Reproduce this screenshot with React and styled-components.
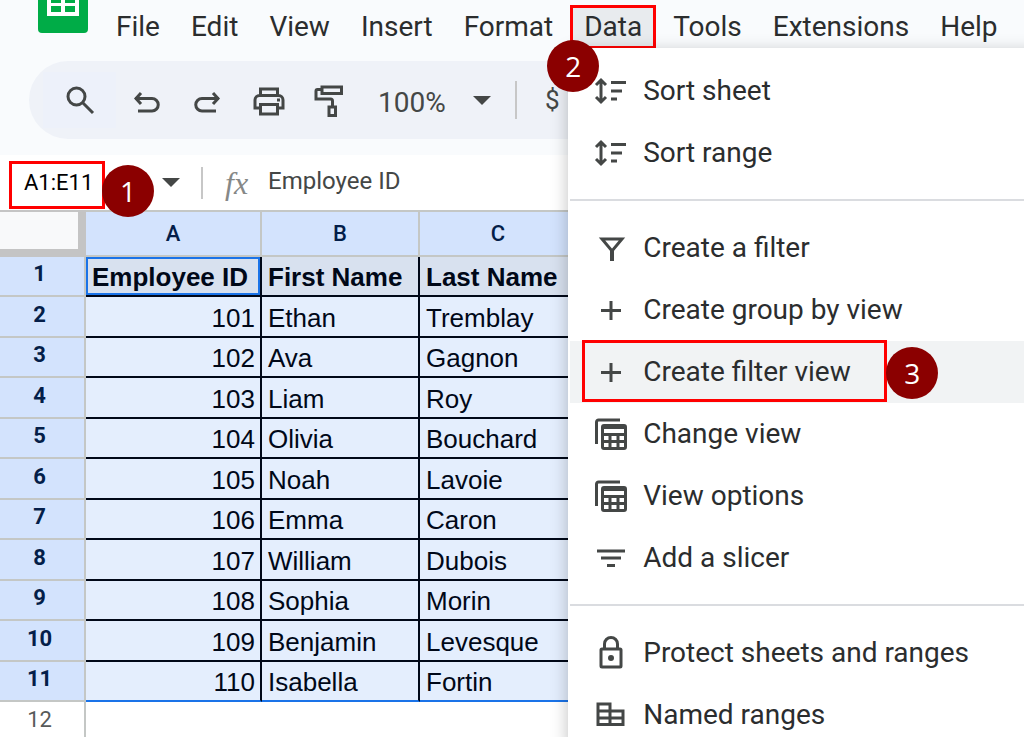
import styled, { createGlobalStyle } from 'styled-components'
import { useState } from 'react'

const employees = [
  { id: 101, firstName: 'Ethan', lastName: 'Tremblay' },
  { id: 102, firstName: 'Ava', lastName: 'Gagnon' },
  { id: 103, firstName: 'Liam', lastName: 'Roy' },
  { id: 104, firstName: 'Olivia', lastName: 'Bouchard' },
  { id: 105, firstName: 'Noah', lastName: 'Lavoie' },
  { id: 106, firstName: 'Emma', lastName: 'Caron' },
  { id: 107, firstName: 'William', lastName: 'Dubois' },
  { id: 108, firstName: 'Sophia', lastName: 'Morin' },
  { id: 109, firstName: 'Benjamin', lastName: 'Levesque' },
  { id: 110, firstName: 'Isabella', lastName: 'Fortin' },
]

const menus = ['File', 'Edit', 'View', 'Insert', 'Format', 'Data', 'Tools', 'Extensions', 'Help']

const SheetsLogo = () => (
  <Logo width="50" height="34" viewBox="0 0 50 34" aria-hidden="true">
    <path d="M0 0h50v29a4 4 0 0 1-4 4H4a4 4 0 0 1-4-4z" fill="#00ac47" />
    <path d="M9 0h32v16H9z" fill="#fff" />
    <path d="M13 0h10v3H13zM27 0h10v3H27zM13 6h10v6H13zM27 6h10v6H27z" fill="#00ac47" />
  </Logo>
)

const SearchIcon = () => (
  <Icon width="34" height="34" viewBox="0 0 34 34">
    <circle cx="13.500" cy="13.500" r="8.500" />
    <path d="M19.500 19.500 30 30" />
  </Icon>
)

const UndoIcon = () => (
  <Icon width="34" height="34" viewBox="0 0 34 34">
    <path d="m11 10-5 5.500 5 5.500M5 15.500h17a5.500 5.500 0 0 1 0 12.500H8" />
  </Icon>
)

const RedoIcon = () => (
  <Icon width="34" height="34" viewBox="0 0 34 34">
    <path d="m22 10 5 5.500-5 5.500M28 15.500H11A5.500 5.500 0 0 0 11 28h14" />
  </Icon>
)

const PrintIcon = () => (
  <Icon width="34" height="34" viewBox="0 0 34 34">
    <path d="M8.500 12V6h17v6M8.500 25H3v-8a4.500 4.500 0 0 1 4.500-4.500h19A4.500 4.500 0 0 1 31 17v8h-5.500" />
    <path d="M8.500 21.500h17V31h-17z" />
    <path d="M25 17h3" />
  </Icon>
)

const PaintIcon = () => (
  <Icon width="34" height="34" viewBox="0 0 34 34">
    <path d="M9 4h19.500v6.500H9zM9 6.500H4.500A1.500 1.500 0 0 0 3 8v8h14.500a2 2 0 0 1 2 2v5" />
    <path d="M16 24h6.500v8.500H16z" />
  </Icon>
)

const Caret = () => (
  <svg width="18" height="9" viewBox="0 0 18 9" aria-hidden="true">
    <path d="M0 0h18L9 9z" fill="#444746" />
  </svg>
)

const SortIcon = () => (
  <Icon width="34" height="34" viewBox="0 0 34 34">
    <path d="M7 6v22M2 11l5-5 5 5M2 23l5 5 5-5M17 8.500h15M17 17h11M17 25h6" />
  </Icon>
)

const FunnelIcon = () => (
  <Icon width="34" height="34" viewBox="0 0 34 34">
    <path d="M8 8h20L18 20z" />
    <path d="M18 18v12" strokeWidth="4" />
  </Icon>
)

const PlusIcon = () => (
  <Icon width="34" height="34" viewBox="0 0 34 34">
    <path d="M17 8v19M7 17.500h20" />
  </Icon>
)

const ViewsIcon = () => (
  <Icon width="34" height="34" viewBox="0 0 34 34">
    <path d="M2.500 27V5a2 2 0 0 1 2-2H26" />
    <rect x="8.500" y="8.500" width="23" height="23" rx="1.500" />
    <path d="M8.500 17.500h23M8.500 24.500h23M16 17.500v14M24 17.500v14" />
    <path d="M8.500 10h23" strokeWidth="4" />
  </Icon>
)

const SlicerIcon = () => (
  <Icon width="34" height="34" viewBox="0 0 34 34">
    <path d="M3 10h28M7 17h20M13 24.500h8" />
  </Icon>
)

const LockIcon = () => (
  <Icon width="34" height="34" viewBox="0 0 34 34">
    <rect x="7" y="13" width="20" height="18" rx="1" />
    <path d="M10.500 13V8a6.500 6.500 0 0 1 13 0v5" />
    <circle cx="17" cy="22" r="1.500" />
  </Icon>
)

const NamedRangesIcon = () => (
  <Icon width="34" height="34" viewBox="0 0 34 34">
    <path d="M4 6h12v20.500H4zM16 13h13v13.500H16zM4 13h12M4 20h25" />
  </Icon>
)

const menuGroups = [
  [
    { label: 'Sort sheet', icon: SortIcon },
    { label: 'Sort range', icon: SortIcon },
  ],
  [
    { label: 'Create a filter', icon: FunnelIcon },
    { label: 'Create group by view', icon: PlusIcon },
    { label: 'Create filter view', icon: PlusIcon, step: 3 },
    { label: 'Change view', icon: ViewsIcon },
    { label: 'View options', icon: ViewsIcon },
    { label: 'Add a slicer', icon: SlicerIcon },
  ],
  [
    { label: 'Protect sheets and ranges', icon: LockIcon },
    { label: 'Named ranges', icon: NamedRangesIcon },
  ],
]

function App() {
  const [range, setRange] = useState('A1:E11')
  const [formula, setFormula] = useState('Employee ID')

  return (
    <>
      <GlobalStyle />
      <Page>
        <Header>
          <MenuBar>
            <SheetsLogo />
            {menus.map((name) => (
              <MenuSlot key={name}>
                <MenuButton $open={name === 'Data'}>{name}</MenuButton>
                {name === 'Data' && (
                  <>
                    <DataMenu>
                      {menuGroups.map((group, i) => (
                        <MenuGroup key={i}>
                          {group.map(({ label, icon: ItemIcon, step }) => (
                            <MenuItem key={label} $hover={!!step}>
                              <ItemIcon />
                              {label}
                              {step && <ItemFrame><Badge $x="301px" $y="4px">{step}</Badge></ItemFrame>}
                            </MenuItem>
                          ))}
                        </MenuGroup>
                      ))}
                    </DataMenu>
                    <Badge $x="-23px" $y="40px">2</Badge>
                  </>
                )}
              </MenuSlot>
            ))}
          </MenuBar>
          <Toolbar>
            <SearchButton aria-label="Search the menus"><SearchIcon /></SearchButton>
            <ToolButton aria-label="Undo"><UndoIcon /></ToolButton>
            <ToolButton aria-label="Redo"><RedoIcon /></ToolButton>
            <ToolButton aria-label="Print"><PrintIcon /></ToolButton>
            <ToolButton aria-label="Paint format"><PaintIcon /></ToolButton>
            <Zoom>
              <select aria-label="Zoom" defaultValue="100%">
                <option>100%</option>
              </select>
              <Caret />
            </Zoom>
            <Separator $height="38px" />
            <CurrencyButton aria-label="Format as currency">$</CurrencyButton>
          </Toolbar>
        </Header>
        <FormulaBar>
          <NameBox>
            <NameInput aria-label="Name box" value={range} onChange={(e) => setRange(e.target.value)} />
            <Badge $x="90px" $y="1px">1</Badge>
          </NameBox>
          <CaretButton aria-label="Named ranges list"><Caret /></CaretButton>
          <Separator $height="32px" />
          <Fx>fx</Fx>
          <FormulaInput aria-label="Formula" value={formula} onChange={(e) => setFormula(e.target.value)} />
        </FormulaBar>
        <Sheet>
          <colgroup>
            <col width="86" />
            <col width="176" />
            <col width="158" />
            <col width="158" />
            <col />
          </colgroup>
          <thead>
            <tr>
              <Corner />
              <ColumnHead>A</ColumnHead>
              <ColumnHead>B</ColumnHead>
              <ColumnHead>C</ColumnHead>
              <ColumnHead />
            </tr>
          </thead>
          <tbody>
            <Row>
              <RowHead>1</RowHead>
              <TitleCell $active>Employee ID</TitleCell>
              <TitleCell>First Name</TitleCell>
              <TitleCell>Last Name</TitleCell>
              <TitleCell />
            </Row>
            {employees.map((employee, i) => (
              <Row key={employee.id} $last={i === employees.length - 1}>
                <RowHead>{i + 2}</RowHead>
                <Cell $number>{employee.id}</Cell>
                <Cell>{employee.firstName}</Cell>
                <Cell>{employee.lastName}</Cell>
                <Cell />
              </Row>
            ))}
            <Row>
              <RowHead $plain>12</RowHead>
              <EmptyCell colSpan="4" />
            </Row>
          </tbody>
        </Sheet>
      </Page>
    </>
  )
}

export default App

const GlobalStyle = createGlobalStyle`
  * {
    box-sizing: border-box;
  }
  body {
    margin: 0;
    overflow: hidden;
    background: #fff;
    font-family: Roboto, "Liberation Sans", sans-serif;
    color: #2b2d2e;
  }
  button, input, select {
    font: inherit;
    color: inherit;
    border: none;
    background: none;
    padding: 0;
    margin: 0;
    outline: none;
  }
`
const Page = styled.div`
  height: 100vh;
  overflow: hidden;
`
const Header = styled.header`
  background: #f9fbfd;
  padding-bottom: 16px;
`
const MenuBar = styled.nav`
  display: flex;
  height: 61px;
  padding-left: 38px;
`
const Logo = styled.svg`
  flex: none;
  margin-right: 14px;
`
const Icon = styled.svg`
  flex: none;
  fill: none;
  stroke: #444746;
  stroke-width: 3;
`
const MenuSlot = styled.div`
  position: relative;
  padding-top: 5px;
`
const MenuButton = styled.button`
  height: 44px;
  padding: 0 11px;
  margin-right: 3px;
  border: 3px solid ${(props) => (props.$open ? '#ff0000' : 'transparent')};
  background: ${(props) => (props.$open ? '#e8ebee' : 'transparent')};
  font-size: 28px;
  line-height: 32px;
`
const Badge = styled.span`
  position: absolute;
  z-index: 3;
  left: ${(props) => props.$x};
  top: ${(props) => props.$y};
  display: flex;
  align-items: center;
  justify-content: center;
  width: 52px;
  height: 52px;
  border-radius: 50%;
  background: #8b0000;
  color: #fff;
  font-family: "Open Sans", "Noto Sans", sans-serif;
  font-size: 28px;
  line-height: 32px;
`
const DataMenu = styled.div`
  position: absolute;
  z-index: 2;
  top: 48px;
  left: -2px;
  width: 560px;
  padding-top: 12px;
  border-left: 2px solid #fff;
  background: #fff;
  box-shadow: 0 4px 16px rgba(0, 0, 0, 0.25);
`
const MenuGroup = styled.div`
  & + & {
    margin-top: 15px;
    padding-top: 16px;
    border-top: 2px solid #dadce0;
  }
`
const MenuItem = styled.button`
  position: relative;
  display: flex;
  align-items: center;
  gap: 15px;
  width: 100%;
  height: 62px;
  padding-left: 24px;
  background: ${(props) => (props.$hover ? '#f1f3f4' : 'transparent')};
  font-size: 28px;
  line-height: 32px;
  text-align: left;
`
const ItemFrame = styled.span`
  position: absolute;
  left: 12px;
  top: -1px;
  width: 305px;
  height: 62px;
  border: 3px solid #ff0000;
`
const Toolbar = styled.div`
  display: flex;
  align-items: center;
  height: 78px;
  margin-left: 29px;
  padding-left: 14px;
  border-radius: 39px 0 0 39px;
  background: #eff2f8;
  color: #444746;
`
const ToolButton = styled.button`
  display: flex;
  justify-content: center;
  width: 61px;
`
const SearchButton = styled(ToolButton)`
  align-items: center;
  width: 73px;
  height: 56px;
  background: #edf1fa;
`
const Zoom = styled.label`
  display: flex;
  align-items: center;
  gap: 27px;
  margin: 0 24px 0 18px;
  select {
    appearance: none;
    padding-top: 6px;
    font-size: 28px;
    line-height: 32px;
  }
`
const Separator = styled.span`
  width: 2px;
  height: ${(props) => props.$height};
  background: #c7c7c7;
`
const CurrencyButton = styled.button`
  margin-left: 28px;
  font-size: 26px;
  line-height: 32px;
`
const FormulaBar = styled.div`
  display: flex;
  align-items: center;
  height: 55px;
  padding-left: 9px;
`
const NameBox = styled.div`
  position: relative;
  width: 96px;
  height: 48px;
  margin-top: 4px;
  border: 3px solid #ff0000;
`
const NameInput = styled.input`
  width: 100%;
  height: 100%;
  padding-left: 12px;
  padding-bottom: 4px;
  font-size: 22px;
  color: #000;
`
const CaretButton = styled.button`
  display: flex;
  margin: 0 21px 0 57px;
`
const Fx = styled.span`
  margin: 0 20px 0 22px;
  font-family: "Liberation Serif", serif;
  font-size: 32px;
  font-style: italic;
  line-height: 32px;
  color: #868887;
`
const FormulaInput = styled.input`
  flex: 1;
  padding-bottom: 4px;
  font-size: 24px;
  color: #444746;
`
const Sheet = styled.table`
  width: 100%;
  table-layout: fixed;
  border-collapse: separate;
  border-spacing: 0;
`
const Corner = styled.td`
  height: 47px;
  padding: 0;
  border: solid #c4c4c4;
  border-width: 2px 8px 8px 0;
  background: #f8f9fa;
`
const ColumnHead = styled.th`
  padding: 0;
  border: solid #c4c7c5;
  border-width: 2px 2px 2px 0;
  background: #d3e3fd;
  color: #041e49;
  font-size: 22px;
  font-weight: 500;
  line-height: 32px;
`
const Row = styled.tr`
  height: 40px;
  &:nth-child(even) {
    height: 41px;
  }
  td {
    border-bottom-color: ${(props) => (props.$last ? '#1a73e8' : '#000818')};
  }
`
const RowHead = styled.th`
  padding: 0 5px 4px 0;
  border: solid #c4c7c5;
  border-width: 0 2px 2px 0;
  background: ${(props) => (props.$plain ? '#fff' : '#d3e3fd')};
  color: ${(props) => (props.$plain ? '#575a5a' : '#041e49')};
  font-size: 22px;
  font-weight: ${(props) => (props.$plain ? 400 : 700)};
  line-height: 32px;
`
const Cell = styled.td`
  padding: ${(props) => (props.$number ? '2px 5px 0 0' : '2px 0 0 6px')};
  border: solid #000818;
  border-width: 0 2px 2px 0;
  background: #e4eefd;
  color: #000818;
  font-family: "Liberation Sans", sans-serif;
  font-size: 26px;
  line-height: 32px;
  text-align: ${(props) => (props.$number ? 'right' : 'left')};
`
const TitleCell = styled(Cell)`
  background: #d8e1ef;
  font-weight: 700;
  box-shadow: ${(props) => (props.$active ? 'inset 0 0 0 2px #1a73e8, 0 2px 0 #1a73e8' : 'none')};
`
const EmptyCell = styled.td`
  padding: 0;
`
